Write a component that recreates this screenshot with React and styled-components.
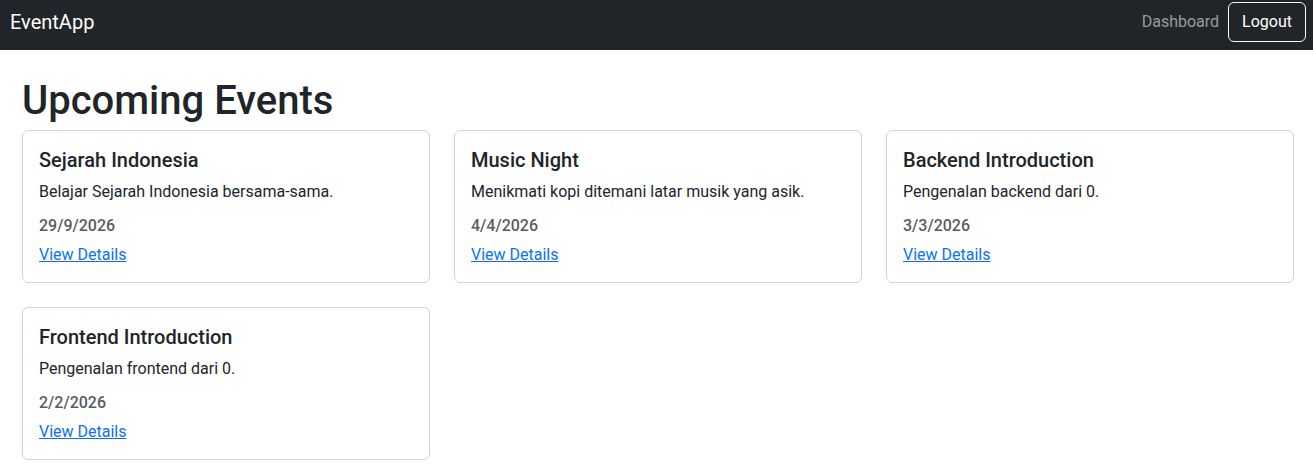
import React from 'react';
import styled, { createGlobalStyle } from 'styled-components';

const GlobalStyle = createGlobalStyle`
  body {
    margin: 0;
    font-family: Roboto, "Liberation Sans", sans-serif;
    font-size: 16px;
    line-height: 1.5;
    color: #212529;
    background: #fff;
  }
`;

const Navbar = styled.nav`
  height: 50px;
  box-sizing: border-box;
  background: #212529;
  display: flex;
  align-items: center;
  justify-content: space-between;
  padding: 2px 7px 8px 10px;
`;

const Brand = styled.a`
  color: #fff;
  font-size: 20px;
  text-decoration: none;
`;

const NavActions = styled.div`
  display: flex;
  align-items: center;
  gap: 9px;
`;

const NavLink = styled.a`
  color: rgba(255, 255, 255, 0.55);
  text-decoration: none;
`;

const OutlineButton = styled.button`
  font: inherit;
  line-height: 24px;
  color: #fff;
  background: transparent;
  border: 1px solid #f8f9fa;
  border-radius: 6px;
  padding: 7px 13px;
  cursor: pointer;
`;

const Main = styled.main`
  padding: 27px 19px 0 22px;
`;

const Heading = styled.h1`
  margin: 0 0 5px;
  font-size: 40px;
  font-weight: 500;
  line-height: 1.2;
`;

const Grid = styled.div`
  display: grid;
  grid-template-columns: repeat(3, 1fr);
  column-gap: 24px;
  row-gap: 24px;
`;

const Card = styled.article`
  border: 1px solid rgba(0, 0, 0, 0.175);
  border-radius: 6px;
  padding: 17px 16px 15px;
`;

const Title = styled.h5`
  margin: 0 0 8px;
  font-size: 20px;
  font-weight: 500;
  line-height: 1.2;
`;

const Text = styled.p`
  margin: 0 0 10px;
`;

const DateText = styled.p`
  margin: 0 0 5px;
  color: #595c5f;
  font-weight: 500;
`;

const DetailLink = styled.a`
  color: #0d6efd;
  text-decoration: underline;
`;

const events = [
  { title: 'Sejarah Indonesia', desc: 'Belajar Sejarah Indonesia bersama-sama.', date: '29/9/2026' },
  { title: 'Music Night', desc: 'Menikmati kopi ditemani latar musik yang asik.', date: '4/4/2026' },
  { title: 'Backend Introduction', desc: 'Pengenalan backend dari 0.', date: '3/3/2026' },
  { title: 'Frontend Introduction', desc: 'Pengenalan frontend dari 0.', date: '2/2/2026' },
];

export default function App() {
  return (
    <>
      <GlobalStyle />
      <Navbar>
        <Brand href="#">EventApp</Brand>
        <NavActions>
          <NavLink href="#">Dashboard</NavLink>
          <OutlineButton>Logout</OutlineButton>
        </NavActions>
      </Navbar>
      <Main>
        <Heading>Upcoming Events</Heading>
        <Grid>
          {events.map((e) => (
            <Card key={e.title}>
              <Title>{e.title}</Title>
              <Text>{e.desc}</Text>
              <DateText>{e.date}</DateText>
              <DetailLink href="#">View Details</DetailLink>
            </Card>
          ))}
        </Grid>
      </Main>
    </>
  );
}
